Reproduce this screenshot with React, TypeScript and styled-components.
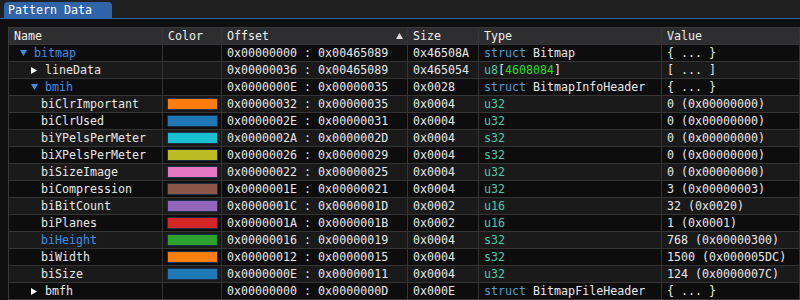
import styled, { createGlobalStyle } from 'styled-components';

const GlobalStyle = createGlobalStyle`
  html, body {
    margin: 0;
    padding: 0;
    background: #0f0f0f;
    width: 800px;
    height: 300px;
    overflow: hidden;
  }
  * { box-sizing: border-box; }
`;

const Window = styled.div`
  width: 800px;
  height: 300px;
  background: #0f0f0f;
  font-family: "DejaVu Sans Mono", "Liberation Mono", monospace;
  font-size: 11.65px;
  color: #e8e8e8;
  overflow: hidden;
`;

const TabBar = styled.div`
  height: 19px;
  background: #202020;
  padding: 2px 0 0 4px;
  border-bottom: 1px solid #3068b0;
  display: flex;
  align-items: flex-end;
`;

const Tab = styled.div`
  width: 108px;
  height: 16px;
  background: #2f64a8;
  border-radius: 4px 4px 0 0;
  padding-left: 4px;
  line-height: 16px;
  color: #ffffff;
`;

const Body = styled.div`
  padding: 8px 0 0 8px;
`;

const Table = styled.div`
  display: grid;
  grid-template-columns: 154px 59px 186px 71px 183px 1fr;
  border-top: 1px solid #3a3a3a;
  border-left: 1px solid #3a3a3a;
`;

const Cell = styled.div<{ $bg: string }>`
  height: 17px;
  line-height: 16px;
  background: ${(p) => p.$bg};
  border-bottom: 1px solid #353535;
  border-right: 1px solid #353535;
  padding-left: 5px;
  white-space: nowrap;
  overflow: hidden;
  display: flex;
  align-items: center;
`;

const HeadCell = styled(Cell)`
  justify-content: space-between;
  padding-right: 4px;
  color: #f0f0f0;
`;

const NameCell = styled(Cell)<{ $indent: number }>`
  padding-left: ${(p) => p.$indent}px;
`;

const Arrow = styled.span`
  width: 14px;
  display: inline-flex;
  align-items: center;
`;

const Swatch = styled.div<{ $c: string }>`
  width: 51px;
  height: 12px;
  margin-left: -1px;
  background: ${(p) => p.$c};
  border: 1px solid #1d2f48;
`;

const Txt = styled.span<{ $c?: string }>`
  color: ${(p) => p.$c || '#e8e8e8'};
  white-space: pre;
`;

const BLUE = '#3d8fe8';
const STRUCT = '#569cd6';
const PRIM = '#4ec9b0';
const NUM = '#22dd22';

type Row = {
  name: string;
  level: number;
  open?: boolean;
  color?: string;
  hl?: boolean;
  offset: string;
  size: string;
  type: React.ReactNode;
  value: string;
};

const struct = (n: string) => (
  <>
    <Txt $c={STRUCT}>struct</Txt>
    <Txt> {n}</Txt>
  </>
);
const prim = (n: string) => <Txt $c={PRIM}>{n}</Txt>;

const rows: Row[] = [
  { name: 'bitmap', level: 0, open: true, hl: true, offset: '0x00000000 : 0x00465089', size: '0x46508A', type: struct('Bitmap'), value: '{ ... }' },
  {
    name: 'lineData', level: 1, open: false, offset: '0x00000036 : 0x00465089', size: '0x465054',
    type: (
      <>
        <Txt $c={PRIM}>u8</Txt>
        <Txt>[</Txt>
        <Txt $c={NUM}>4608084</Txt>
        <Txt>]</Txt>
      </>
    ),
    value: '[ ... ]',
  },
  { name: 'bmih', level: 1, open: true, hl: true, offset: '0x0000000E : 0x00000035', size: '0x0028', type: struct('BitmapInfoHeader'), value: '{ ... }' },
  { name: 'biClrImportant', level: 2, color: '#ff7f0e', offset: '0x00000032 : 0x00000035', size: '0x0004', type: prim('u32'), value: '0 (0x00000000)' },
  { name: 'biClrUsed', level: 2, color: '#1f77b4', offset: '0x0000002E : 0x00000031', size: '0x0004', type: prim('u32'), value: '0 (0x00000000)' },
  { name: 'biYPelsPerMeter', level: 2, color: '#17becf', offset: '0x0000002A : 0x0000002D', size: '0x0004', type: prim('s32'), value: '0 (0x00000000)' },
  { name: 'biXPelsPerMeter', level: 2, color: '#bcbd22', offset: '0x00000026 : 0x00000029', size: '0x0004', type: prim('s32'), value: '0 (0x00000000)' },
  { name: 'biSizeImage', level: 2, color: '#e377c2', offset: '0x00000022 : 0x00000025', size: '0x0004', type: prim('u32'), value: '0 (0x00000000)' },
  { name: 'biCompression', level: 2, color: '#8c564b', offset: '0x0000001E : 0x00000021', size: '0x0004', type: prim('u32'), value: '3 (0x00000003)' },
  { name: 'biBitCount', level: 2, color: '#9467bd', offset: '0x0000001C : 0x0000001D', size: '0x0002', type: prim('u16'), value: '32 (0x0020)' },
  { name: 'biPlanes', level: 2, color: '#d62728', offset: '0x0000001A : 0x0000001B', size: '0x0002', type: prim('u16'), value: '1 (0x0001)' },
  { name: 'biHeight', level: 2, color: '#2ca02c', hl: true, offset: '0x00000016 : 0x00000019', size: '0x0004', type: prim('s32'), value: '768 (0x00000300)' },
  { name: 'biWidth', level: 2, color: '#ff7f0e', offset: '0x00000012 : 0x00000015', size: '0x0004', type: prim('s32'), value: '1500 (0x000005DC)' },
  { name: 'biSize', level: 2, color: '#1f77b4', offset: '0x0000000E : 0x00000011', size: '0x0004', type: prim('u32'), value: '124 (0x0000007C)' },
  { name: 'bmfh', level: 1, open: false, offset: '0x00000000 : 0x0000000D', size: '0x000E', type: struct('BitmapFileHeader'), value: '{ ... }' },
];

function TreeArrow({ open }: { open: boolean }) {
  return (
    <Arrow>
      {open ? (
        <svg width="7" height="6" viewBox="0 0 7 6">
          <polygon points="0,0 7,0 3.5,6" fill={BLUE} />
        </svg>
      ) : (
        <svg width="6" height="7" viewBox="0 0 6 7">
          <polygon points="0,0 6,3.5 0,7" fill="#ffffff" />
        </svg>
      )}
    </Arrow>
  );
}

function SortUp() {
  return (
    <svg width="7" height="6" viewBox="0 0 7 6">
      <polygon points="3.5,0 7,6 0,6" fill="#e0e0e0" />
    </svg>
  );
}

const headers = ['Name', 'Color', 'Offset', 'Size', 'Type', 'Value'];

export default function App() {
  return (
    <Window>
      <GlobalStyle />
      <TabBar>
        <Tab>Pattern Data</Tab>
      </TabBar>
      <Body>
        <Table>
          {headers.map((h) => (
            <HeadCell key={h} $bg="#2e2e31">
              <span>{h}</span>
              {h === 'Offset' && <SortUp />}
            </HeadCell>
          ))}
          {rows.map((r, i) => {
            const bg = i % 2 === 0 ? '#0d0d0d' : '#1a1a1a';
            const hasKids = r.open !== undefined;
            const indent = hasKids ? 11 + r.level * 11 : 32;
            return [
              <NameCell key={`n${i}`} $bg={bg} $indent={indent}>
                {hasKids && <TreeArrow open={!!r.open} />}
                <Txt $c={r.hl ? BLUE : undefined}>{r.name}</Txt>
              </NameCell>,
              <Cell key={`c${i}`} $bg={bg}>{r.color && <Swatch $c={r.color} />}</Cell>,
              <Cell key={`o${i}`} $bg={bg}>
                <Txt>{r.offset}</Txt>
              </Cell>,
              <Cell key={`s${i}`} $bg={bg}>
                <Txt>{r.size}</Txt>
              </Cell>,
              <Cell key={`t${i}`} $bg={bg}>{r.type}</Cell>,
              <Cell key={`v${i}`} $bg={bg}>
                <Txt>{r.value}</Txt>
              </Cell>,
            ];
          })}
        </Table>
      </Body>
    </Window>
  );
}
